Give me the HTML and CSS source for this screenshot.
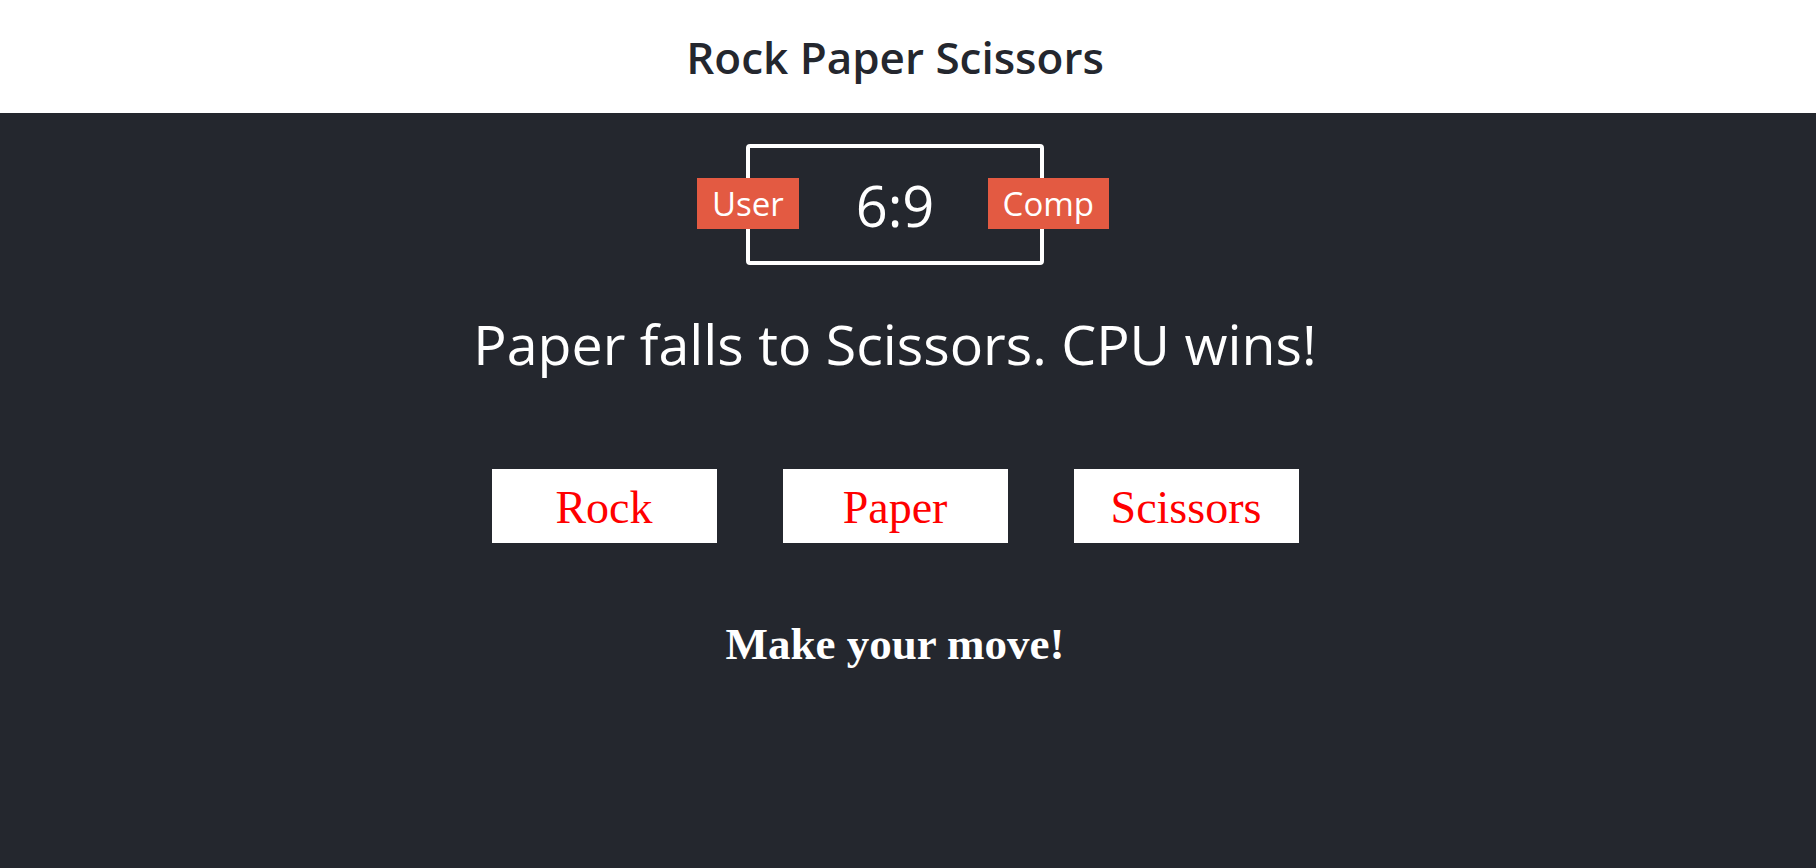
FILE: index.html
```html
<!DOCTYPE html>
<html lang="en">
<head>
<meta charset="utf-8">
<title>Rock Paper Scissors</title>
<link rel="stylesheet" href="styles.css">
</head>
<body>
  <header class="header">
    <h1 class="title">Rock Paper Scissors</h1>
  </header>
  <main class="game">
    <div class="score-board">
      <div class="badge badge-user">User</div>
      <div class="badge badge-comp">Comp</div>
      <span class="score">6:9</span>
    </div>
    <div class="result">Paper falls to Scissors. CPU wins!</div>
    <div class="choices">
      <div class="choice">Rock</div>
      <div class="choice">Paper</div>
      <div class="choice">Scissors</div>
    </div>
    <p class="action">Make your move!</p>
  </main>
</body>
</html>
```
FILE: styles.css
```css
* {
  box-sizing: border-box;
}

html, body {
  margin: 0;
  padding: 0;
  height: 100%;
}

body {
  background: #24272e;
  font-family: "Open Sans", "Noto Sans", sans-serif;
  overflow: hidden;
}

.header {
  background: #ffffff;
  height: 113px;
  padding: 27px 26px 0 0;
}

.title {
  margin: 0;
  text-align: center;
  font-size: 44px;
  font-weight: 600;
  line-height: normal;
  color: #24272e;
}

.game {
  padding: 31px 26px 0 0;
  display: flex;
  flex-direction: column;
  align-items: center;
}

.score-board {
  position: relative;
  width: 298px;
  height: 121px;
  border: 4px solid #ffffff;
  border-radius: 4px;
  padding-top: 19px;
  text-align: center;
  color: #ffffff;
}

.score {
  font-size: 56px;
  line-height: normal;
}

.badge {
  position: absolute;
  top: 30px;
  height: 51px;
  padding: 0 15px;
  background: #e35a42;
  color: #ffffff;
  font-size: 33px;
  line-height: 51px;
}

.badge-user {
  left: -53px;
}

.badge-comp {
  right: -69px;
}

.result {
  margin-top: 41px;
  font-size: 55.5px;
  line-height: normal;
  color: #ffffff;
}

.choices {
  margin-top: 88px;
  display: flex;
  gap: 66px;
}

.choice {
  width: 225px;
  height: 74px;
  background: #ffffff;
  display: flex;
  align-items: center;
  justify-content: center;
  padding-top: 2px;
  font-family: "Liberation Serif", "Times New Roman", serif;
  font-size: 46px;
  color: #ff0000;
}

.action {
  margin: 75px 0 0;
  font-family: "Liberation Serif", "Times New Roman", serif;
  font-weight: bold;
  font-size: 45px;
  line-height: normal;
  color: #ffffff;
}
```
